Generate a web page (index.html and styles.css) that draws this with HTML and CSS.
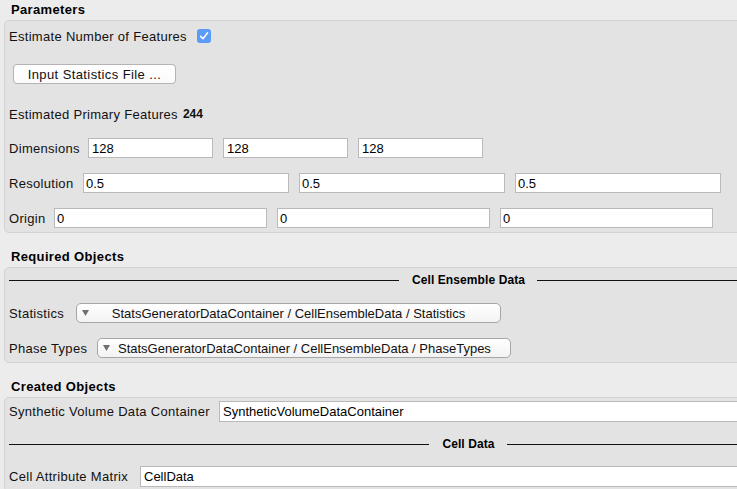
FILE: index.html
```html
<!DOCTYPE html>
<html lang="en">
<head>
<meta charset="utf-8">
<title>Parameters</title>
<link rel="stylesheet" href="styles.css">
</head>
<body>
<div class="page">
  <section class="group">
    <h2 class="group-title">Parameters</h2>
    <div class="group-box box-params">
      <div class="row r-est">
        <span class="lbl">Estimate Number of Features</span>
        <span class="check">
          <svg width="14" height="14" viewBox="0 0 14 14"><rect x="0" y="0" width="14" height="14" rx="3" fill="#5a9bf5"/><polyline points="3.6,7.4 6,9.8 10.6,3.8" fill="none" stroke="#fff" stroke-width="1.5" stroke-linecap="round" stroke-linejoin="round"/></svg>
        </span>
      </div>
      <div class="row r-btn"><button class="btn">Input Statistics File ...</button></div>
      <div class="row r-prim"><span class="lbl">Estimated Primary Features</span><b class="val">244</b></div>
      <div class="row vec dims">
        <span class="lbl">Dimensions</span>
        <span class="field">128</span><span class="field">128</span><span class="field">128</span>
      </div>
      <div class="row vec res">
        <span class="lbl">Resolution</span>
        <span class="field">0.5</span><span class="field">0.5</span><span class="field">0.5</span>
      </div>
      <div class="row vec origin">
        <span class="lbl">Origin</span>
        <span class="field">0</span><span class="field">0</span><span class="field">0</span>
      </div>
    </div>
  </section>

  <section class="group">
    <h2 class="group-title">Required Objects</h2>
    <div class="group-box box-req">
      <div class="sep"><span>Cell Ensemble Data</span></div>
      <div class="row r-stats">
        <span class="lbl">Statistics</span>
        <span class="combo"><svg class="arrow" width="7" height="6" viewBox="0 0 7 6"><polygon points="0,0 7,0 3.5,6" fill="#707070"/></svg><span class="combo-text">StatsGeneratorDataContainer / CellEnsembleData / Statistics</span><span></span></span>
      </div>
      <div class="row r-phase">
        <span class="lbl">Phase Types</span>
        <span class="combo"><svg class="arrow" width="7" height="6" viewBox="0 0 7 6"><polygon points="0,0 7,0 3.5,6" fill="#707070"/></svg><span class="combo-text">StatsGeneratorDataContainer / CellEnsembleData / PhaseTypes</span><span></span></span>
      </div>
    </div>
  </section>

  <section class="group">
    <h2 class="group-title">Created Objects</h2>
    <div class="group-box box-created">
      <div class="row tall r-svdc">
        <span class="lbl">Synthetic Volume Data Container</span>
        <span class="field wide">SyntheticVolumeDataContainer</span>
      </div>
      <div class="sep sep-cell"><span>Cell Data</span></div>
      <div class="row tall r-cam">
        <span class="lbl">Cell Attribute Matrix</span>
        <span class="field wide">CellData</span>
      </div>
    </div>
  </section>
</div>
</body>
</html>
```

FILE: styles.css
```css
* { box-sizing: border-box; }
html, body { margin: 0; padding: 0; }
body {
  width: 737px;
  height: 489px;
  overflow: hidden;
  background: #ececec;
  font-family: "Liberation Sans", Arial, sans-serif;
  font-size: 13px;
  color: #111;
}
.page { width: 932px; }
.group + .group { margin-top: 14px; }
.group-title {
  margin: 0;
  height: 20px;
  line-height: 20px;
  padding-left: 11px;
  font-size: 13px;
  font-weight: bold;
  letter-spacing: 0.35px;
  color: #000;
}
.group-box {
  margin-left: 4px;
  background: #e3e3e3;
  border: 1px solid #d2d2d2;
  border-radius: 5px;
  padding: 0 4px;
}
.box-params { padding-top: 5px; padding-bottom: 4px; }
.box-req { padding-top: 1px; padding-bottom: 4px; }
.box-created { padding-top: 3px; padding-bottom: 4px; }

.row {
  display: flex;
  align-items: center;
  height: 20px;
}
.row.tall { height: 21px; }
.lbl { letter-spacing: 0.3px; white-space: nowrap; flex: none; }

.check { display: flex; margin-left: 10px; margin-top: -1px; }

.r-btn { margin-top: 18px; }
.btn {
  margin-left: 4px;
  width: 163px;
  height: 20px;
  padding: 0;
  border: 1px solid #b4b4b4;
  border-radius: 4px;
  background: linear-gradient(#ffffff, #fbfbfb);
  font-family: inherit;
  font-size: 13px;
  letter-spacing: 0.4px;
  color: #111;
}
.r-prim { margin-top: 20px; }
.val { font-size: 12px; margin-left: 5px; }

.field {
  display: flex;
  align-items: center;
  height: 100%;
  padding: 0 3px;
  background: #fff;
  border: 1px solid #bababa;
  font-size: 13px;
  white-space: nowrap;
  overflow: hidden;
  color: #000;
}
.vec { column-gap: 10px; }
.dims { margin-top: 14px; }
.dims .lbl { width: 69px; }
.dims .field { width: 125px; }
.res { margin-top: 15px; }
.res .lbl { width: 64px; }
.res .field { width: 206px; padding-left: 2px; }
.origin { margin-top: 15px; }
.origin .lbl { width: 35px; }
.origin .field { width: 213px; padding-left: 2px; }

.sep {
  display: flex;
  align-items: center;
  height: 20px;
  margin-top: 1px;
  font-size: 12px;
  font-weight: bold;
  letter-spacing: 0.1px;
  color: #000;
}
.sep::before, .sep::after {
  content: "";
  flex: 1;
  height: 1px;
  background: #111;
}
.sep span { padding: 0 12px 0 13px; }

.combo {
  display: grid;
  grid-template-columns: 20px 1fr 20px;
  align-items: center;
  height: 20px;
  border: 1px solid #a6a6a6;
  border-radius: 5px;
  background: linear-gradient(#ffffff, #f3f3f3);
  font-size: 13px;
  color: #111;
}
.combo .arrow { margin-left: 5px; }
.combo-text { text-align: center; white-space: nowrap; }
.r-stats { margin-top: 13px; }
.r-stats .lbl { width: 67px; }
.r-stats .combo { width: 425px; }
.r-phase { margin-top: 15px; }
.r-phase .lbl { width: 88px; }
.r-phase .combo { width: 414px; }

.field.wide { flex: 1; }
.r-svdc .lbl { width: 210px; }
.sep-cell { margin-top: 12px; }
.r-cam { margin-top: 12px; }
.r-cam .lbl { width: 131px; }
```
